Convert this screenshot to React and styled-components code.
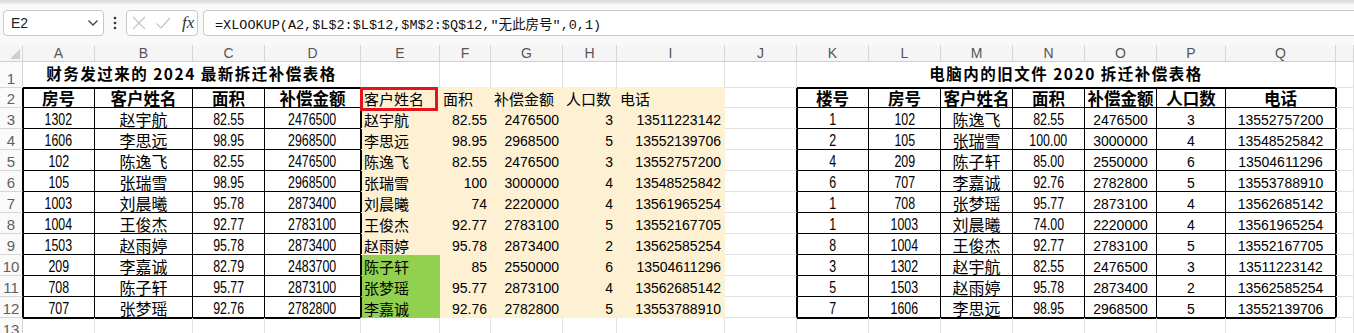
import React from 'react';
import styled, { createGlobalStyle, css } from 'styled-components';

const GRID = '#e1e1e1';
const HEAD_LINE = '#d6d6d6';
const CREAM = '#fdf0d3';
const GREEN = '#92d050';
const BLACK = '#000';

const COLS = ['A', 'B', 'C', 'D', 'E', 'F', 'G', 'H', 'I', 'J', 'K', 'L', 'M', 'N', 'O', 'P', 'Q', 'R'];
const WIDTHS = [72, 98, 72, 96, 79, 51, 72, 54, 108, 72, 72, 72, 72, 72, 72, 69, 110];
const TEMPLATE = `23px ${WIDTHS.map((w) => `${w}px`).join(' ')} 1fr`;

const LEFT = [
  ['房号', '客户姓名', '面积', '补偿金额'],
  ['1302', '赵宇航', '82.55', '2476500'],
  ['1606', '李思远', '98.95', '2968500'],
  ['102', '陈逸飞', '82.55', '2476500'],
  ['105', '张瑞雪', '98.95', '2968500'],
  ['1003', '刘晨曦', '95.78', '2873400'],
  ['1004', '王俊杰', '92.77', '2783100'],
  ['1503', '赵雨婷', '95.78', '2873400'],
  ['209', '李嘉诚', '82.79', '2483700'],
  ['708', '陈子轩', '95.77', '2873100'],
  ['707', '张梦瑶', '92.76', '2782800'],
];

const STAGE = [
  ['客户姓名', '面积', '补偿金额', '人口数', '电话'],
  ['赵宇航', '82.55', '2476500', '3', '13511223142'],
  ['李思远', '98.95', '2968500', '5', '13552139706'],
  ['陈逸飞', '82.55', '2476500', '3', '13552757200'],
  ['张瑞雪', '100', '3000000', '4', '13548525842'],
  ['刘晨曦', '74', '2220000', '4', '13561965254'],
  ['王俊杰', '92.77', '2783100', '5', '13552167705'],
  ['赵雨婷', '95.78', '2873400', '2', '13562585254'],
  ['陈子轩', '85', '2550000', '6', '13504611296'],
  ['张梦瑶', '95.77', '2873100', '4', '13562685142'],
  ['李嘉诚', '92.76', '2782800', '5', '13553788910'],
];

const RIGHT = [
  ['楼号', '房号', '客户姓名', '面积', '补偿金额', '人口数', '电话'],
  ['1', '102', '陈逸飞', '82.55', '2476500', '3', '13552757200'],
  ['2', '105', '张瑞雪', '100.00', '3000000', '4', '13548525842'],
  ['4', '209', '陈子轩', '85.00', '2550000', '6', '13504611296'],
  ['6', '707', '李嘉诚', '92.76', '2782800', '5', '13553788910'],
  ['1', '708', '张梦瑶', '95.77', '2873100', '4', '13562685142'],
  ['1', '1003', '刘晨曦', '74.00', '2220000', '4', '13561965254'],
  ['8', '1004', '王俊杰', '92.77', '2783100', '5', '13552167705'],
  ['3', '1302', '赵宇航', '82.55', '2476500', '3', '13511223142'],
  ['5', '1503', '赵雨婷', '95.78', '2873400', '2', '13562585254'],
  ['7', '1606', '李思远', '98.95', '2968500', '5', '13552139706'],
];

const GlobalStyle = createGlobalStyle`
  html, body { margin: 0; padding: 0; background: #fff; overflow: hidden; }
  body { font-family: "Liberation Sans", "Noto Sans CJK SC", sans-serif; }
`;

const Page = styled.div`
  width: 1354px;
  height: 333px;
  overflow: hidden;
  background: #fff;
`;

const TopStrip = styled.div`
  height: 4px;
  background: linear-gradient(#d9d9d9, #efefef);
`;

const FormulaBar = styled.div`
  display: flex;
  align-items: flex-start;
  height: 41px;
  box-sizing: border-box;
  padding: 6px 0 0 3px;
  background: #f9f9f9;
`;

const Box = styled.div`
  display: flex;
  align-items: center;
  height: 26px;
  box-sizing: border-box;
  border: 1px solid #c9c9c9;
  border-radius: 4px;
  background: #fff;
`;

const NameBox = styled(Box)`
  width: 101px;
  justify-content: space-between;
  padding: 0 4px 0 7px;
  font-family: "Liberation Sans", sans-serif;
  font-size: 14px;
  color: #222;
`;

const Dots = styled.div`
  width: 22px;
  height: 26px;
  display: flex;
  align-items: center;
  justify-content: center;
`;

const FxBox = styled(Box)`
  width: 72px;
  padding: 0 0 0 4px;
  gap: 8px;
`;

const Fx = styled.span`
  font-family: "Liberation Serif", serif;
  font-style: italic;
  font-size: 17px;
  color: #333;
  margin-left: 3px;
`;

const FormulaBox = styled(Box)`
  flex: 1;
  margin-left: 5px;
  margin-right: -12px;
  padding-left: 11px;
  font-family: "Liberation Mono", "Noto Sans CJK SC", monospace;
  font-size: 13.5px;
  color: #111;
  white-space: pre;
`;

const Sheet = styled.div`
  display: grid;
  grid-template-columns: ${TEMPLATE};
  grid-template-rows: 17px 26px 20px repeat(10, 21px) 21px;
`;

const Corner = styled.div`
  position: relative;
  background: #f5f5f5;
  border-right: 1px solid ${HEAD_LINE};
  border-bottom: 1px solid #cfcfcf;
  box-sizing: border-box;
  &::after {
    content: '';
    position: absolute;
    right: 2px;
    bottom: 2px;
    border-style: solid;
    border-width: 0 0 10px 10px;
    border-color: transparent transparent #cdcdcd transparent;
  }
`;

const ColHead = styled.div`
  display: flex;
  align-items: center;
  justify-content: center;
  box-sizing: border-box;
  background: #f5f5f5;
  border-right: 1px solid ${HEAD_LINE};
  border-bottom: 1px solid #cfcfcf;
  font-family: "Liberation Sans", sans-serif;
  font-size: 14px;
  line-height: 1;
  color: #555;
`;

const RowHead = styled.div`
  display: flex;
  align-items: flex-end;
  justify-content: center;
  box-sizing: border-box;
  padding-bottom: 1px;
  background: #fafafa;
  border-right: 1px solid ${(p) => (p.$black ? BLACK : HEAD_LINE)};
  border-bottom: 1px solid ${HEAD_LINE};
  font-family: "Liberation Sans", sans-serif;
  font-size: 15px;
  line-height: 1;
  color: #606060;
`;

const FONTS = {
  narrow: css`
    font-family: "Liberation Sans", sans-serif;
    font-size: 16.5px;
  `,
  num: css`
    font-family: "Liberation Sans", sans-serif;
    font-size: 14px;
  `,
  cjk: css`
    font-family: "Noto Sans CJK SC", sans-serif;
    font-size: 16px;
  `,
  scjk: css`
    font-family: "Noto Sans CJK SC", sans-serif;
    font-size: 15px;
  `,
  head: css`
    font-family: "Noto Sans CJK SC", sans-serif;
    font-size: 16.5px;
    font-weight: 700;
  `,
  title: css`
    font-family: "Noto Sans CJK SC", sans-serif;
    font-size: 15.5px;
    font-weight: 700;
    letter-spacing: 1.5px;
  `,
};

const insetShadow = (l, t) => {
  const parts = [];
  if (l) parts.push(`inset 1px 0 0 ${BLACK}`);
  if (t) parts.push(`inset 0 1px 0 ${BLACK}`);
  return parts.length ? parts.join(', ') : 'none';
};

const Cell = styled.div`
  position: relative;
  box-sizing: border-box;
  display: flex;
  align-items: ${(p) => (p.$middle ? 'center' : 'flex-end')};
  justify-content: ${(p) => (p.$align === 'left' ? 'flex-start' : p.$align === 'right' ? 'flex-end' : 'center')};
  padding: 0 3px 1px;
  white-space: nowrap;
  line-height: 1;
  color: #000;
  grid-column: span ${(p) => p.$span || 1};
  background: ${(p) => p.$bg || '#fff'};
  border-right: 1px solid ${(p) => p.$rc || p.$bg || GRID};
  border-bottom: 1px solid ${(p) => p.$bc || p.$bg || GRID};
  box-shadow: ${(p) => insetShadow(p.$edgeL, p.$edgeT)};
  ${(p) => FONTS[p.$font || 'num']}
`;

const Condensed = styled.span`
  display: inline-block;
  transform: scaleX(0.75);
  transform-origin: center;
`;

const RedFrame = styled.div`
  position: absolute;
  left: -1px;
  top: -1px;
  width: 78px;
  height: 24px;
  box-sizing: border-box;
  border: 3px solid #e5141c;
  z-index: 2;
  pointer-events: none;
`;

function Chevron() {
  return (
    <svg width="12" height="8" viewBox="0 0 12 8">
      <path d="M1.5 1.5 L6 6 L10.5 1.5" fill="none" stroke="#444" strokeWidth="1.3" />
    </svg>
  );
}

function VDots() {
  return (
    <svg width="4" height="14" viewBox="0 0 4 14">
      <circle cx="2" cy="2" r="1.3" fill="#333" />
      <circle cx="2" cy="7" r="1.3" fill="#333" />
      <circle cx="2" cy="12" r="1.3" fill="#333" />
    </svg>
  );
}

function Cross() {
  return (
    <svg width="16" height="16" viewBox="0 0 16 16">
      <path d="M2 2 L14 14 M14 2 L2 14" stroke="#c4c4c4" strokeWidth="1.2" fill="none" />
    </svg>
  );
}

function Check() {
  return (
    <svg width="16" height="16" viewBox="0 0 16 16">
      <path d="M1.5 8.5 L6 13 L15 3" stroke="#c4c4c4" strokeWidth="1.2" fill="none" />
    </svg>
  );
}

function content(font, v) {
  return font === 'narrow' ? <Condensed>{v}</Condensed> : v;
}

function leftCell(i, c) {
  const v = LEFT[i][c];
  const font = i === 0 ? 'head' : c === 1 ? 'cjk' : 'narrow';
  return (
    <Cell key={`L${i}-${c}`} $font={font} $rc={BLACK} $bc={BLACK} $edgeL={c === 0} $edgeT={i === 0}>
      {content(font, v)}
    </Cell>
  );
}

function stageCell(i, c) {
  const v = STAGE[i][c];
  const bg = c === 0 && i >= 8 ? GREEN : CREAM;
  const font = i === 0 ? 'scjk' : c === 0 ? 'scjk' : 'num';
  const align = i === 0 || c === 0 ? 'left' : 'right';
  return (
    <Cell key={`S${i}-${c}`} $font={font} $bg={bg} $align={align} $edgeL={c === 0}>
      {v}
      {i === 0 && c === 0 && <RedFrame />}
    </Cell>
  );
}

function rightCell(i, c) {
  const v = RIGHT[i][c];
  const font = i === 0 ? 'head' : c === 2 ? 'cjk' : c <= 3 ? 'narrow' : 'num';
  return (
    <Cell key={`R${i}-${c}`} $font={font} $rc={BLACK} $bc={BLACK} $edgeL={c === 0} $edgeT={i === 0}>
      {content(font, v)}
    </Cell>
  );
}

function renderRows() {
  const cells = [];
  cells.push(<Corner key="corner" />);
  COLS.forEach((col) => {
    cells.push(<ColHead key={`h${col}`}>{col === 'R' ? '' : col}</ColHead>);
  });

  cells.push(<RowHead key="rh1">1</RowHead>);
  cells.push(
    <Cell key="t1" $span={4} $font="title" $bc={BLACK} $middle>
      财务发过来的 2024 最新拆迁补偿表格
    </Cell>
  );
  for (let c = 0; c < 5; c += 1) cells.push(<Cell key={`e1-${c}`} $bc={CREAM} />);
  cells.push(<Cell key="j1" />);
  cells.push(
    <Cell key="t2" $span={7} $font="title" $bc={BLACK} $middle>
      电脑内的旧文件 2020 拆迁补偿表格
    </Cell>
  );
  cells.push(<Cell key="r1" />);

  for (let i = 0; i < 11; i += 1) {
    cells.push(
      <RowHead key={`rh${i + 2}`} $black>
        {i + 2}
      </RowHead>
    );
    for (let c = 0; c < 4; c += 1) cells.push(leftCell(i, c));
    for (let c = 0; c < 5; c += 1) cells.push(stageCell(i, c));
    cells.push(<Cell key={`j${i}`} $rc={BLACK} />);
    for (let c = 0; c < 7; c += 1) cells.push(rightCell(i, c));
    cells.push(<Cell key={`r${i}`} $edgeL />);
  }

  cells.push(<RowHead key="rh13">13</RowHead>);
  COLS.forEach((col, idx) => {
    const top = idx <= 3 || (idx >= 10 && idx <= 16);
    cells.push(<Cell key={`x${col}`} $edgeT={top} />);
  });
  return cells;
}

export default function App() {
  return (
    <Page>
      <GlobalStyle />
      <TopStrip />
      <FormulaBar>
        <NameBox>
          <span>E2</span>
          <Chevron />
        </NameBox>
        <Dots>
          <VDots />
        </Dots>
        <FxBox>
          <Cross />
          <Check />
          <Fx>fx</Fx>
        </FxBox>
        <FormulaBox>=XLOOKUP(A2,$L$2:$L$12,$M$2:$Q$12,"无此房号",0,1)</FormulaBox>
      </FormulaBar>
      <Sheet>{renderRows()}</Sheet>
    </Page>
  );
}
